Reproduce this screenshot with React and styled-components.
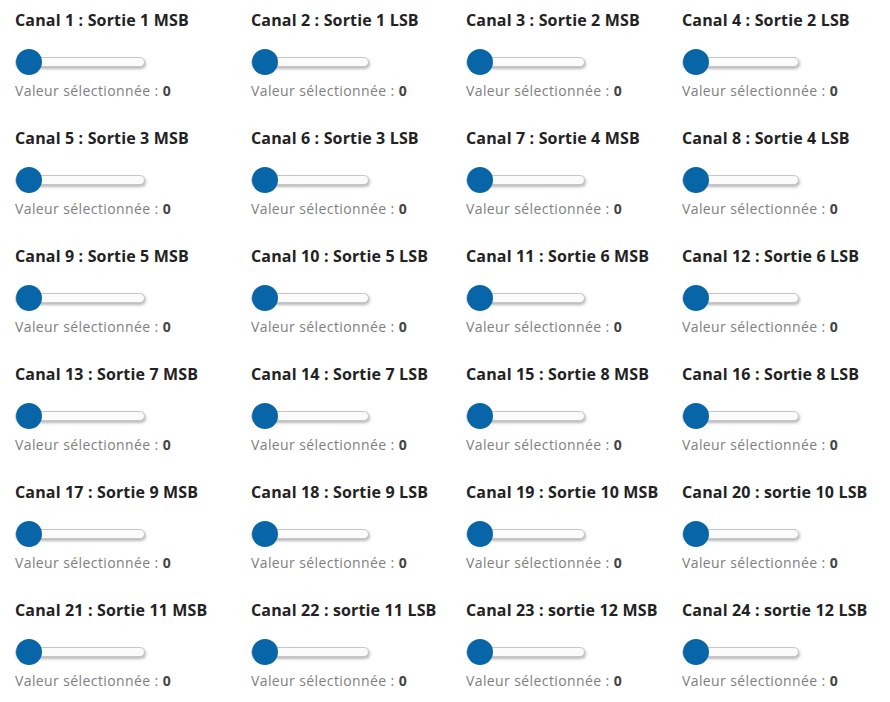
import React from "react";
import styled, { createGlobalStyle } from "styled-components";

const GlobalStyle = createGlobalStyle`
    body {
        margin: 0;
        background: #fff;
        font-family: "Open Sans", "Noto Sans", sans-serif;
    }
`;

const Grid = styled.div`
    display: grid;
    grid-template-columns: 236px 215px 216px 213px;
    row-gap: 28px;
    padding: 10px 0 0 15px;
`;

const Cell = styled.div`
    display: flex;
    flex-direction: column;
    align-items: flex-start;
`;

const Title = styled.div`
    font-size: 16px;
    font-weight: 700;
    line-height: 20px;
    letter-spacing: 0.15px;
    color: #222;
    white-space: nowrap;
`;

const Range = styled.input`
    -webkit-appearance: none;
    appearance: none;
    width: 55%;
    height: 28px;
    margin: 18px 0 0 0;
    padding: 0;
    background: transparent;

    &::-webkit-slider-runnable-track {
        height: 10px;
        border: 1px solid #c6c6c6;
        border-radius: 5px;
        background: #fbfbfb;
        box-shadow: 1px 2px 3px rgba(0,0,0,0.28);
    }
    &::-webkit-slider-thumb {
        -webkit-appearance: none;
        width: 26px;
        height: 26px;
        margin-top: -9px;
        border-radius: 50%;
        background: #0866a8;
        border: none;
    }
`;

const Value = styled.div`
    margin-top: 6px;
    font-size: 14px;
    line-height: 18px;
    letter-spacing: 0.4px;
    color: #808080;
    white-space: nowrap;
    b {
        color: #444;
        font-weight: 700;
    }
`;

const channels = [
    "Sortie 1 MSB", "Sortie 1 LSB", "Sortie 2 MSB", "Sortie 2 LSB",
    "Sortie 3 MSB", "Sortie 3 LSB", "Sortie 4 MSB", "Sortie 4 LSB",
    "Sortie 5 MSB", "Sortie 5 LSB", "Sortie 6 MSB", "Sortie 6 LSB",
    "Sortie 7 MSB", "Sortie 7 LSB", "Sortie 8 MSB", "Sortie 8 LSB",
    "Sortie 9 MSB", "Sortie 9 LSB", "Sortie 10 MSB", "sortie 10 LSB",
    "Sortie 11 MSB", "sortie 11 LSB", "sortie 12 MSB", "sortie 12 LSB",
];

export default function App() {
    return (
        <>
            <GlobalStyle />
            <Grid>
                {channels.map((label, i) => (
                    <Cell key={i}>
                        <Title>Canal {i + 1} : {label}</Title>
                        <Range type="range" min={0} max={255} defaultValue={0} />
                        <Value>Valeur sélectionnée : <b>0</b></Value>
                    </Cell>
                ))}
            </Grid>
        </>
    );
}
